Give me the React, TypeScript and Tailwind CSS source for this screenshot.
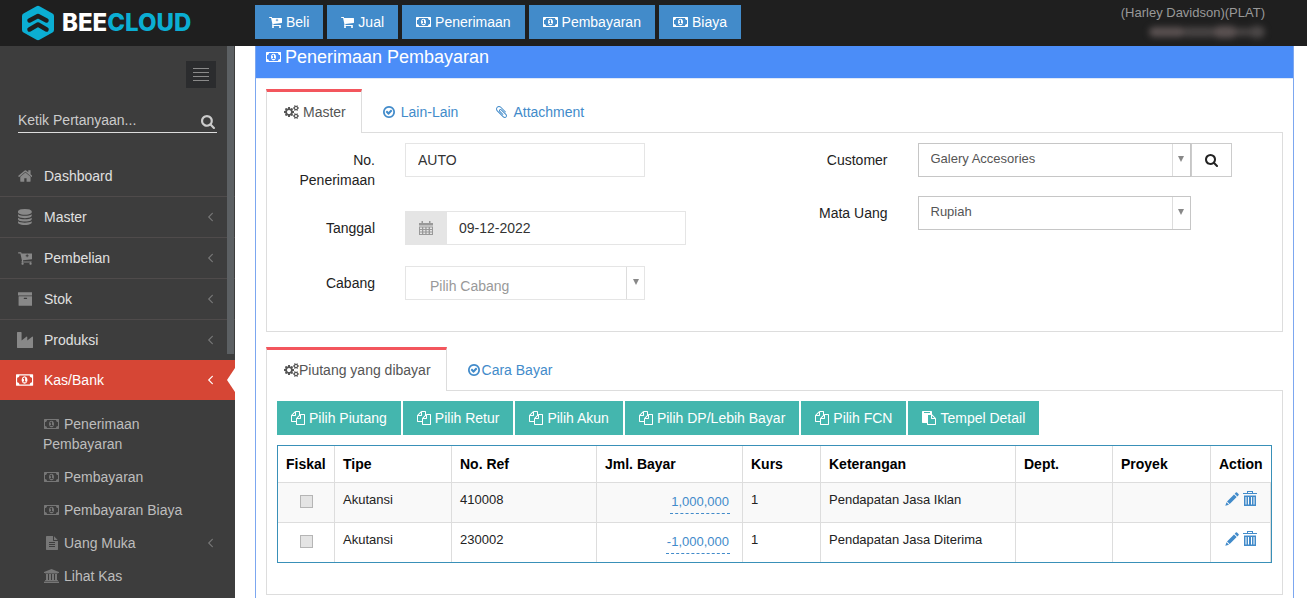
import React, { useState } from "react";
import clsx from "clsx";

type IconDef = { box: string; d: string };

const cartPath =
  "M704 1536q0 52-38 90t-90 38-90-38-38-90 38-90 90-38 90 38 38 90zm896 0q0 52-38 90t-90 38-90-38-38-90 38-90 90-38 90 38 38 90zm128-1088v512q0 24-16.5 42.5t-40.5 21.5l-1044 122q13 60 13 70 0 16-24 64h920q26 0 45 19t19 45-19 45-45 19h-1024q-26 0-45-19t-19-45q0-11 8-31.5t16-36 21.5-40 15.5-29.5l-177-823h-204q-26 0-45-19t-19-45 19-45 45-19h256q16 0 28.5 6.5t19.5 15.5 13 24.5 8 26 5.5 29.5 4.5 26h1201q26 0 45 19t19 45z";

const icons = {
  cart: { box: "64 0 1664 1792", d: cartPath },
  cartPlus: {
    box: "64 0 1664 1792",
    d: cartPath + "M1040 480h96v112h112v96h-112v112h-96v-112h-112v-96h112z",
  },
  money: {
    box: "0 0 1920 1792",
    d: "M768 1152h384v-96h-128v-448h-114l-148 137 77 80q42-37 55-57h2v288h-128v96zm512-256q0 70-21 142t-59.5 134-101.5 101-138 39-138-39-101.5-101-59.5-134-21-142 21-142 59.5-134 101.5-101 138-39 138 39 101.5 101 59.5 134 21 142zm512 256v-512q-106 0-181-75t-75-181h-1152q0 106-75 181t-181 75v512q106 0 181 75t75 181h1152q0-106 75-181t181-75zm128-832v1152q0 26-19 45t-45 19h-1792q-26 0-45-19t-19-45v-1152q0-26 19-45t45-19h1792q26 0 45 19t19 45z",
  },
  home: {
    box: "64 0 1664 1792",
    d: "M1472 992v480q0 26-19 45t-45 19h-384v-384h-256v384h-384q-26 0-45-19t-19-45v-480q0-1 .5-3t.5-3l575-474 575 474q1 2 1 6zm223-69l-62 74q-8 9-21 11h-3q-13 0-21-7l-692-577-692 577q-12 8-24 7-13-2-21-11l-62-74q-8-10-7-23.5t11-21.5l719-599q32-26 76-26t76 26l244 204v-195q0-14 9-23t23-9h192q14 0 23 9t9 23v408l219 182q10 8 11 21.5t-7 23.5z",
  },
  database: {
    box: "128 0 1536 1792",
    d: "M896 768q237 0 443-43t325-127v170q0 69-103 128t-280 93.5-385 34.5-385-34.5-280-93.5-103-128v-170q119 84 325 127t443 43zm0 768q237 0 443-43t325-127v170q0 69-103 128t-280 93.5-385 34.5-385-34.5-280-93.5-103-128v-170q119 84 325 127t443 43zm0-384q237 0 443-43t325-127v170q0 69-103 128t-280 93.5-385 34.5-385-34.5-280-93.5-103-128v-170q119 84 325 127t443 43zm0-1152q208 0 385 34.5t280 93.5 103 128v128q0 69-103 128t-280 93.5-385 34.5-385-34.5-280-93.5-103-128v-128q0-69 103-128t280-93.5 385-34.5z",
  },
  archive: {
    box: "64 0 1664 1792",
    d: "M1088 832q0-26-19-45t-45-19h-256q-26 0-45 19t-19 45 19 45 45 19h256q26 0 45-19t19-45zm576-192v960q0 26-19 45t-45 19h-1408q-26 0-45-19t-19-45v-960q0-26 19-45t45-19h1408q26 0 45 19t19 45zm64-448v256q0 26-19 45t-45 19h-1536q-26 0-45-19t-19-45v-256q0-26 19-45t45-19h1536q26 0 45 19t19 45z",
  },
  industry: {
    box: "0 0 1792 1792",
    d: "M448 0q26 0 45 19t19 45v891l536-429q17-14 40-14 26 0 45 19t19 45v379l536-429q17-14 40-14 26 0 45 19t19 45v1152q0 26-19 45t-45 19h-1664q-26 0-45-19t-19-45v-1664q0-26 19-45t45-19h384z",
  },
  fileText: {
    box: "128 0 1536 1792",
    d: "M1596 476q14 14 28 36h-472v-472q22 14 36 28zm-476 164h544v1056q0 40-28 68t-68 28h-1344q-40 0-68-28t-28-68v-1600q0-40 28-68t68-28h800v544q0 40 28 68t68 28zm160 736v-64q0-14-9-23t-23-9h-704q-14 0-23 9t-9 23v64q0 14 9 23t23 9h704q14 0 23-9t9-23zm0-256v-64q0-14-9-23t-23-9h-704q-14 0-23 9t-9 23v64q0 14 9 23t23 9h704q14 0 23-9t9-23zm0-256v-64q0-14-9-23t-23-9h-704q-14 0-23 9t-9 23v64q0 14 9 23t23 9h704q14 0 23-9t9-23z",
  },
  bank: {
    box: "0 0 1920 1792",
    d: "M960 0l960 384v128h-128q0 26-20.5 45t-48.5 19h-1526q-28 0-48.5-19t-20.5-45h-128v-128zm-704 640h256v768h128v-768h256v768h128v-768h256v768h128v-768h256v768h59q28 0 48.5 19t20.5 45v64h-1664v-64q0-26 20.5-45t48.5-19h59v-768zm1595 960q28 0 48.5 19t20.5 45v128h-1920v-128q0-26 20.5-45t48.5-19h1782z",
  },
  cogs: {
    box: "0 0 1920 1792",
    d: "M896 896q0-106-75-181t-181-75-181 75-75 181 75 181 181 75 181-75 75-181zm768 512q0-52-38-90t-90-38-90 38-38 90q0 53 37.5 90.5t90.5 37.5 90.5-37.5 37.5-90.5zm0-1024q0-52-38-90t-90-38-90 38-38 90q0 53 37.5 90.5t90.5 37.5 90.5-37.5 37.5-90.5zm-384 421v185q0 10-7 19.5t-16 10.5l-155 24q-11 35-32 76 34 48 90 115 7 11 7 20 0 12-7 19-23 30-82.5 89.5t-78.5 59.5q-11 0-21-7l-115-90q-37 19-77 31-11 108-23 155-7 24-30 24h-186q-11 0-20-7.5t-10-17.5l-23-153q-34-10-75-31l-118 89q-7 7-20 7-11 0-21-8-144-133-144-160 0-9 7-19 10-14 41-53t47-61q-23-44-35-82l-152-24q-10-1-17-9.5t-7-19.5v-185q0-10 7-19.5t16-10.5l155-24q11-35 32-76-34-48-90-115-7-11-7-20 0-12 7-20 22-30 82-89t79-59q11 0 21 7l115 90q34-18 77-32 11-108 23-154 7-24 30-24h186q11 0 20 7.5t10 17.5l23 153q34 10 75 31l118-89q8-7 20-7 11 0 21 8 144 133 144 160 0 8-7 19-12 16-42 54t-45 60q23 48 34 82l152 23q10 2 17 10.5t7 19.5zm640 533v140q0 16-149 31-12 27-30 52 51 113 51 138 0 4-4 7-122 71-124 71-8 0-46-47t-52-68q-20 2-30 2t-30-2q-14 21-52 68t-46 47q-2 0-124-71-4-3-4-7 0-25 51-138-18-25-30-52-149-15-149-31v-140q0-16 149-31 13-29 30-52-51-113-51-138 0-4 4-7 4-2 35-20t59-34 30-16q8 0 46 46.5t52 67.5q20-2 30-2t30 2q51-71 92-112l6-2q4 0 124 70 4 3 4 7 0 25-51 138 17 23 30 52 149 15 149 31zm0-1024v140q0 16-149 31-12 27-30 52 51 113 51 138 0 4-4 7-122 71-124 71-8 0-46-47t-52-68q-20 2-30 2t-30-2q-14 21-52 68t-46 47q-2 0-124-71-4-3-4-7 0-25 51-138-18-25-30-52-149-15-149-31v-140q0-16 149-31 13-29 30-52-51-113-51-138 0-4 4-7 4-2 35-20t59-34 30-16q8 0 46 46.5t52 67.5q20-2 30-2t30 2q51-71 92-112l6-2q4 0 124 70 4 3 4 7 0 25-51 138 17 23 30 52 149 15 149 31z",
  },
  check: {
    box: "128 0 1536 1792",
    d: "M1299 813l-422 422q-19 19-45 19t-45-19l-294-294q-19-19-19-45t19-45l102-102q19-19 45-19t45 19l147 147 275-275q19-19 45-19t45 19l102 102q19 19 19 45t-19 45zm141 83q0-148-73-273t-198-198-273-73-273 73-198 198-73 273 73 273 198 198 273 73 273-73 198-198 73-273zm224 0q0 209-103 385.5t-279.5 279.5-385.5 103-385.5-103-279.5-279.5-103-385.5 103-385.5 279.5-279.5 385.5-103 385.5 103 279.5 279.5 103 385.5z",
  },
  clip: {
    box: "192 0 1408 1792",
    d: "M1596 1385q0 117-79 196t-196 79q-135 0-235-100l-777-776q-113-115-113-271 0-159 110-270t269-111q158 0 273 113l605 606q10 10 10 22 0 16-30.5 46.5t-46.5 30.5q-13 0-23-10l-606-607q-79-77-181-77-106 0-179 75t-73 181q0 105 76 181l776 777q63 63 145 63 64 0 106-42t42-106q0-82-63-145l-581-581q-26-24-60-24-29 0-48 19t-19 48q0 32 25 59l410 410q10 10 10 22 0 16-31 47t-47 31q-12 0-22-10l-410-410q-63-61-63-149 0-82 57-139t139-57q88 0 149 63l581 581q100 98 100 235z",
  },
  search: {
    box: "64 128 1664 1664",
    d: "M1216 832q0-185-131.5-316.5t-316.5-131.5-316.5 131.5-131.5 316.5 131.5 316.5 316.5 131.5 316.5-131.5 131.5-316.5zm512 832q0 52-38 90t-90 38q-54 0-90-38l-343-342q-179 124-399 124-143 0-273.5-55.5t-225-150-150-225-55.5-273.5 55.5-273.5 150-225 225-150 273.5-55.5 273.5 55.5 225 150 150 225 55.5 273.5q0 220-124 399l343 343q37 37 37 90z",
  },
  files: {
    box: "0 0 1792 1792",
    d: "M1696 384q40 0 68 28t28 68v1216q0 40-28 68t-68 28h-960q-40 0-68-28t-28-68v-288h-544q-40 0-68-28t-28-68v-672q0-40 20-88t48-76l408-408q28-28 76-48t88-20h416q40 0 68 28t28 68v328q68-40 128-40h416zm-544 213l-299 299h299v-299zm-640-384l-299 299h299v-299zm196 647l316-316v-416h-384v416q0 40-28 68t-68 28h-416v640h512v-256q0-40 20-88t48-76zm956 804v-1152h-384v416q0 40-28 68t-68 28h-416v640h896z",
  },
  paste: {
    box: "0 0 1792 1792",
    d: "M768 1664h896v-640h-416q-40 0-68-28t-28-68v-416h-384v1152zm256-1440v-64q0-13-9.5-22.5t-22.5-9.5h-704q-13 0-22.5 9.5t-9.5 22.5v64q0 13 9.5 22.5t22.5 9.5h704q13 0 22.5-9.5t9.5-22.5zm256 672h299l-299-299v299zm512 128v672q0 40-28 68t-68 28h-960q-40 0-68-28t-28-68v-160h-544q-40 0-68-28t-28-68v-1344q0-40 28-68t68-28h1088q40 0 68 28t28 68v328q21 13 36 28l408 408q28 28 48 76t20 88z",
  },
  angleLeft: {
    box: "500 380 760 1160",
    d: "M1203 544q0 13-10 23l-393 393 393 393q10 10 10 23t-10 23l-50 50q-10 10-23 10t-23-10l-466-466q-10-10-10-23t10-23l466-466q10-10 23-10t23 10l50 50q10 10 10 23z",
  },
  calendar: {
    box: "0 0 14 14",
    d: "M0 2h2.500v-2h1.500v2h6v-2h1.500v2h2.500v2.500h-14zM0 5.500h14v8.500h-14zM1 6.500v1.500h2v-1.500zM4.300 6.500v1.500h2v-1.500zM7.600 6.500v1.500h2v-1.500zM11 6.500v1.500h2v-1.500zM1 9v1.500h2v-1.500zM4.300 9v1.500h2v-1.500zM7.600 9v1.500h2v-1.500zM11 9v1.500h2v-1.500zM1 11.500v1.500h2v-1.500zM4.300 11.500v1.500h2v-1.500zM7.600 11.500v1.500h2v-1.500zM11 11.500v1.500h2v-1.500z",
  },
  pencil: {
    box: "0 0 14 14",
    d: "M10.800.6q.6-.6 1.200 0l1.500 1.500q.6.600 0 1.200l-1.100 1.100-2.700-2.700zM9 2.400l2.700 2.700-7 7-2.700-2.700zM1.500 10.200l2.500 2.500-3.700 1.100z",
  },
  trash: {
    box: "0 0 14 15",
    d: "M4 0h6v2h4v1h-14v-1h4zM5 1v1h4v-1zM1 4.500h12v10.500h-12zM2.500 6v7.500h1v-7.500zM5 6v7.500h1v-7.500zM8 6v7.500h1v-7.500zM10.500 6v7.500h1v-7.500z",
  },
} satisfies Record<string, IconDef>;

type IconName = keyof typeof icons;

function Icon({ name, className = "h-3.5" }: { name: IconName; className?: string }) {
  return (
    <svg
      viewBox={icons[name].box}
      fill="currentColor"
      fillRule={name === "cogs" ? "nonzero" : "evenodd"}
      aria-hidden="true"
      className={clsx("w-auto shrink-0", className)}
    >
      <path d={icons[name].d} />
    </svg>
  );
}

const shortcuts: { label: string; icon: IconName }[] = [
  { label: "Beli", icon: "cartPlus" },
  { label: "Jual", icon: "cart" },
  { label: "Penerimaan", icon: "money" },
  { label: "Pembayaran", icon: "money" },
  { label: "Biaya", icon: "money" },
];

const menu: { label: string; icon: IconName; sub?: boolean }[] = [
  { label: "Dashboard", icon: "home" },
  { label: "Master", icon: "database", sub: true },
  { label: "Pembelian", icon: "cartPlus", sub: true },
  { label: "Stok", icon: "archive", sub: true },
  { label: "Produksi", icon: "industry", sub: true },
];

const subMenu: { label: string; icon: IconName; sub?: boolean }[] = [
  { label: "Penerimaan Pembayaran", icon: "money" },
  { label: "Pembayaran", icon: "money" },
  { label: "Pembayaran Biaya", icon: "money" },
  { label: "Uang Muka", icon: "fileText", sub: true },
  { label: "Lihat Kas", icon: "bank" },
];

const actions: { label: string; icon: IconName }[] = [
  { label: "Pilih Piutang", icon: "files" },
  { label: "Pilih Retur", icon: "files" },
  { label: "Pilih Akun", icon: "files" },
  { label: "Pilih DP/Lebih Bayar", icon: "files" },
  { label: "Pilih FCN", icon: "files" },
  { label: "Tempel Detail", icon: "paste" },
];

const columns = [
  { label: "Fiskal", width: "w-[57px]" },
  { label: "Tipe", width: "w-[117px]" },
  { label: "No. Ref", width: "w-[145px]" },
  { label: "Jml. Bayar", width: "w-[146px]" },
  { label: "Kurs", width: "w-[78px]" },
  { label: "Keterangan", width: "w-[195px]" },
  { label: "Dept.", width: "w-[97px]" },
  { label: "Proyek", width: "w-[98px]" },
  { label: "Action", width: "w-[60px]" },
];

const rows = [
  { tipe: "Akutansi", ref: "410008", jumlah: "1,000,000", kurs: "1", ket: "Pendapatan Jasa Iklan" },
  { tipe: "Akutansi", ref: "230002", jumlah: "-1,000,000", kurs: "1", ket: "Pendapatan Jasa Diterima" },
];

function Logo() {
  return (
    <a href="#" className="flex w-[255px] shrink-0 items-center gap-2 pt-[5px] pl-[22px]">
      <svg viewBox="0 0 32 36" className="h-9 w-8" aria-hidden="true">
        <path
          d="M14.500 1.200q1.500-.8 3 0l13 7.300q1.500.8 1.500 2.500v14q0 1.700-1.500 2.500l-13 7.300q-1.500.8-3 0l-13-7.300q-1.500-.8-1.500-2.500v-14q0-1.700 1.500-2.500z"
          fill="#0baed3"
        />
        <path
          d="M7.500 15.500l8.500-4.500 8.500 4.500M7.500 24.500l8.500-5 8.500 5"
          fill="none"
          stroke="#1f1f1f"
          strokeWidth="4.500"
          strokeLinecap="round"
          strokeLinejoin="round"
        />
      </svg>
      <span className="font-[family-name:Inter,sans-serif] text-2xl leading-8 font-extrabold text-white">
        BEE<span className="text-[#0baed3]">CLOUD</span>
      </span>
    </a>
  );
}

function Header() {
  return (
    <header className="flex h-[46px] items-start bg-[#1f1f1f]">
      <Logo />
      <nav className="flex gap-1 pt-[5px]">
        {shortcuts.map((s) => (
          <button
            key={s.label}
            type="button"
            className="flex h-[34px] cursor-pointer items-center gap-1 bg-[#428bca] px-3.5 text-white"
          >
            <Icon name={s.icon} />
            {s.label}
          </button>
        ))}
      </nav>
      <div className="ml-auto flex flex-col items-end gap-1 pt-1 pr-[42px] text-[13px] leading-[18px] text-[#999]">
        <span>(Harley Davidson)(PLAT)</span>
        <span className="flex h-3 w-[116px] items-center blur-[3px]">
          <span className="h-2.5 w-9 rounded-full bg-[#5b5252]" />
          <span className="h-2.5 w-7 bg-[#484444]" />
          <span className="h-3 w-6 rounded-full bg-[#5b5252]" />
          <span className="h-2 w-3 bg-[#484444]" />
          <span className="h-3 w-4 rounded-full bg-[#4c4848]" />
        </span>
      </div>
    </header>
  );
}

function Sidebar() {
  return (
    <aside className="relative w-[235px] shrink-0 bg-[#3d3d3d]">
      <div className="flex justify-end pt-[15px] pr-[19px]">
        <button
          type="button"
          aria-label="Toggle menu"
          className="flex h-[27px] w-[30px] cursor-pointer flex-col items-center justify-center gap-[3px] bg-[#2b2c2e]"
        >
          <span className="h-px w-4 bg-[#8a8a8a]" />
          <span className="h-px w-4 bg-[#8a8a8a]" />
          <span className="h-px w-4 bg-[#8a8a8a]" />
          <span className="h-px w-4 bg-[#8a8a8a]" />
        </button>
      </div>
      <form className="mt-5 mr-[18px] mb-[23px] ml-[18px] flex items-center border-b border-[#ddd] text-[#ccc]">
        <input
          type="text"
          aria-label="Ketik Pertanyaan"
          placeholder="Ketik Pertanyaan..."
          className="h-6 min-w-0 flex-1 bg-transparent outline-none placeholder:text-[#ccc]"
        />
        <button type="button" aria-label="Cari" className="cursor-pointer pt-1 pr-0.5">
          <Icon name="search" />
        </button>
      </form>
      <ul>
        {menu.map((m, i) => (
          <li key={m.label} className={clsx(i < menu.length - 1 && "border-b border-[#4f4b4b]")}>
            <a href="#" className="flex h-10 items-center pr-[21px] pl-4 text-[#e0e0e0]">
              <span className="mr-2.5 flex w-[18px] justify-center text-[#888]">
                <Icon name={m.icon} className="h-4" />
              </span>
              {m.label}
              {m.sub && <Icon name="angleLeft" className="ml-auto h-2.5 text-[#777]" />}
            </a>
          </li>
        ))}
        <li>
          <a
            href="#"
            className="relative flex h-10 items-center bg-[#d64635] pr-[21px] pl-4 text-white"
          >
            <span className="mr-2.5 flex w-[18px] justify-center">
              <Icon name="money" className="h-4" />
            </span>
            Kas/Bank
            <Icon name="angleLeft" className="ml-auto h-2.5" />
            <svg viewBox="0 0 8 24" className="absolute top-2 right-0 h-6 w-2" aria-hidden="true">
              <path d="M8 0v24l-8-12z" fill="#fff" />
            </svg>
          </a>
          <ul className="flex flex-col gap-px py-2">
            {subMenu.map((s) => (
              <li key={s.label}>
                <a href="#" className="flex items-center py-1.5 pr-[21px] pl-[43px] leading-5 text-[#bdbdbd]">
                  <span>
                    <span className="mr-1 inline-flex w-[17px] justify-center align-[-2px] text-[#777]">
                      <Icon name={s.icon} />
                    </span>
                    {s.label}
                  </span>
                  {s.sub && <Icon name="angleLeft" className="ml-auto h-2.5 text-[#777]" />}
                </a>
              </li>
            ))}
          </ul>
        </li>
      </ul>
      <div className="absolute top-0 right-px h-[308px] w-[7px] bg-[#5c6063]" />
    </aside>
  );
}

type TabsProps = {
  tabs: { label: string; icon: IconName }[];
  tight?: boolean;
};

function Tabs({ tabs, tight }: TabsProps) {
  const [active, setActive] = useState(tabs[0].label);

  return (
    <div role="tablist" className="relative -mb-px flex gap-0.5">
      {tabs.map((t) => (
        <button
          key={t.label}
          type="button"
          role="tab"
          aria-selected={active === t.label}
          onClick={() => setActive(t.label)}
          className={clsx(
            "flex cursor-pointer items-center border-x border-t-3 pt-2.5 pr-[15px] pb-[11px] pl-4 leading-5",
            active === t.label
              ? "border-x-[#ddd] border-t-[#f3565d] bg-white text-[#555]"
              : "border-transparent text-[#428bca]",
            !tight && "gap-1"
          )}
        >
          <span className="flex w-4 justify-center">
            <Icon name={t.icon} />
          </span>
          {t.label}
        </button>
      ))}
    </div>
  );
}

type SelectProps = {
  id: string;
  value: string;
  width: string;
  className: string;
};

function Select({ id, value, width, className }: SelectProps) {
  return (
    <div className={clsx("relative h-[34px]", width)}>
      <select id={id} className={clsx("h-full w-full appearance-none border bg-white outline-none", className)}>
        <option>{value}</option>
      </select>
      <span className="pointer-events-none absolute inset-y-px right-px flex w-[18px] justify-center border-l border-[#ddd] pt-3">
        <svg viewBox="0 0 6 6" className="h-1.5 w-1.5" aria-hidden="true">
          <path d="M0 0h6l-3 6z" fill="#888" />
        </svg>
      </span>
    </div>
  );
}

function Field({ id, label, width, children }: { id: string; label: string; width: string; children: React.ReactNode }) {
  return (
    <div className="flex items-start gap-[30px]">
      <label htmlFor={id} className={clsx("shrink-0 pt-[7px] text-right leading-5 text-[#222]", width)}>
        {label}
      </label>
      <div className="flex">{children}</div>
    </div>
  );
}

function MasterForm() {
  const input = "h-[34px] w-60 border border-[#e5e5e5] bg-white px-3 text-[#333] outline-none";

  return (
    <div className="grid grid-cols-2 border border-[#ddd] px-2.5 pt-2.5 pb-[31px]">
      <div className="flex flex-col gap-[21px]">
        <Field id="nomor" label="No. Penerimaan" width="w-[98px]">
          <input id="nomor" type="text" defaultValue="AUTO" className={input} />
        </Field>
        <Field id="tanggal" label="Tanggal" width="w-[98px]">
          <span className="flex w-[41px] items-center justify-center bg-[#e5e5e5] text-[#999]">
            <Icon name="calendar" />
          </span>
          <input id="tanggal" type="text" defaultValue="09-12-2022" className={input} />
        </Field>
        <Field id="cabang" label="Cabang" width="w-[98px]">
          <Select
            id="cabang"
            value="Pilih Cabang"
            width="w-60"
            className="border-[#e5e5e5] pt-1.5 pl-6 text-[#999]"
          />
        </Field>
      </div>
      <div className="flex flex-col gap-[19px]">
        <Field id="customer" label="Customer" width="w-[113px]">
          <Select
            id="customer"
            value="Galery Accesories"
            width="w-[273px]"
            className="border-[#c6c6c6] pb-0.5 pl-3 text-[13px] text-[#555]"
          />
          <button
            type="button"
            aria-label="Cari customer"
            className="flex h-[34px] w-[41px] cursor-pointer items-center justify-center border border-[#ccc] text-[#222]"
          >
            <Icon name="search" className="h-[13px]" />
          </button>
        </Field>
        <Field id="matauang" label="Mata Uang" width="w-[113px]">
          <Select
            id="matauang"
            value="Rupiah"
            width="w-[273px]"
            className="border-[#c6c6c6] pb-0.5 pl-3 text-[13px] text-[#555]"
          />
        </Field>
      </div>
    </div>
  );
}

function DetailTable() {
  return (
    <div className="mt-2.5 border border-[#3990b8]">
      <table className="w-full table-fixed border-separate border-spacing-0 text-[13px] text-[#222]">
        <thead>
          <tr className="h-9">
            {columns.map((col) => (
              <th
                key={col.label}
                className={clsx("border-r border-[#ddd] px-2 text-left text-sm text-black last:border-r-0", col.width)}
              >
                {col.label}
              </th>
            ))}
          </tr>
        </thead>
        <tbody>
          {rows.map((row, index) => (
            <tr
              key={row.ref}
              className="h-10 align-top odd:bg-[#f9f9f9] *:border-t *:border-r *:border-[#ddd] *:px-2 *:leading-[18px]"
            >
              <td className="pt-3">
                <input
                  type="checkbox"
                  disabled
                  aria-label={`Fiskal ${index + 1}`}
                  className="mx-auto block h-[13px] w-[13px] appearance-none border border-[#b5b5b5] bg-[#e4e4e4]"
                />
              </td>
              <td className="pt-2">{row.tipe}</td>
              <td className="pt-2">{row.ref}</td>
              <td className="pt-2.5 text-right">
                <a
                  href="#"
                  className="mr-1 inline-block border-b border-dashed border-[#428bca] px-px pb-0.5 text-[#428bca]"
                >
                  {row.jumlah}
                </a>
              </td>
              <td className="pt-2">{row.kurs}</td>
              <td className="pt-2">{row.ket}</td>
              <td />
              <td />
              <td className="pt-2">
                <div className="flex justify-center gap-1 text-[#428bca]">
                  <button type="button" aria-label="Edit" className="cursor-pointer">
                    <Icon name="pencil" />
                  </button>
                  <button type="button" aria-label="Hapus" className="cursor-pointer">
                    <Icon name="trash" className="h-[15px]" />
                  </button>
                </div>
              </td>
            </tr>
          ))}
        </tbody>
      </table>
    </div>
  );
}

export default function App() {
  return (
    <div className="flex h-screen flex-col overflow-hidden bg-white font-['Liberation_Sans',Arial,sans-serif] text-sm">
      <Header />
      <div className="flex min-h-0 flex-1">
        <Sidebar />
        <main className="mr-[13px] ml-5 min-w-0 flex-1 border-x border-[#7ca7f0]">
          <h1 className="flex items-center gap-1 border-b border-[#dfe8f8] bg-[#4b8df8] pb-2.5 pl-2.5 text-lg leading-[22px] text-white">
            <Icon name="money" />
            Penerimaan Pembayaran
          </h1>
          <div className="px-2.5 pt-2.5">
            <Tabs
              tabs={[
                { label: "Master", icon: "cogs" },
                { label: "Lain-Lain", icon: "check" },
                { label: "Attachment", icon: "clip" },
              ]}
            />
            <MasterForm />
            <div className="mt-[15px]">
              <Tabs
                tight
                tabs={[
                  { label: "Piutang yang dibayar", icon: "cogs" },
                  { label: "Cara Bayar", icon: "check" },
                ]}
              />
              <div className="border border-[#ddd] px-2.5 pt-2.5 pb-[31px]">
                <div className="flex flex-wrap gap-0.5">
                  {actions.map((a) => (
                    <button
                      key={a.label}
                      type="button"
                      className="flex h-[34px] cursor-pointer items-center gap-1 bg-[#44b6ae] px-3.5 text-white"
                    >
                      <Icon name={a.icon} />
                      {a.label}
                    </button>
                  ))}
                </div>
                <DetailTable />
              </div>
            </div>
          </div>
        </main>
      </div>
    </div>
  );
}
